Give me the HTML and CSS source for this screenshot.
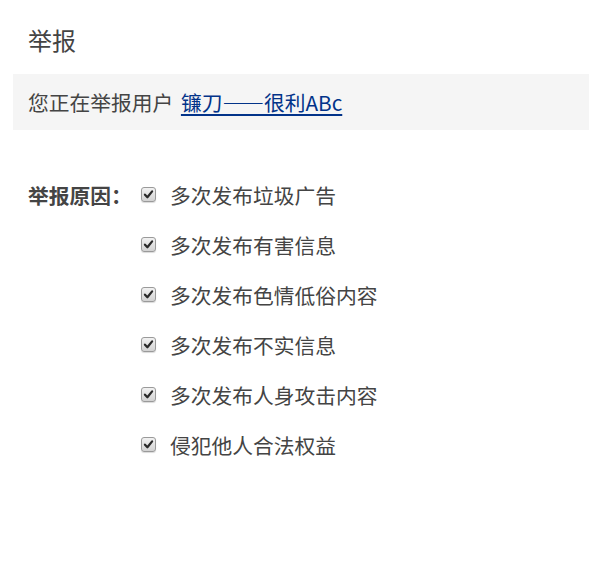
FILE: index.html
```html
<!DOCTYPE html>
<html lang="zh-CN">
<head>
<meta charset="utf-8">
<title>举报</title>
<link rel="stylesheet" href="styles.css">
</head>
<body>
<div class="page">
  <h1 class="title">举报</h1>
  <div class="notice">您正在举报用户 <a class="user" href="#">镰刀——很利ABc</a></div>
  <div class="reasons">
    <div class="label">举报原因：</div>
    <ul class="options">
      <li class="option"><span class="box"><svg viewBox="0 0 14 14"><path d="M3.2 7.2 L5.8 10 L10.9 3.6" fill="none" stroke="#2a2a2a" stroke-width="2.4" stroke-linecap="round" stroke-linejoin="round"/></svg></span><span class="text">多次发布垃圾广告</span></li>
      <li class="option"><span class="box"><svg viewBox="0 0 14 14"><path d="M3.2 7.2 L5.8 10 L10.9 3.6" fill="none" stroke="#2a2a2a" stroke-width="2.4" stroke-linecap="round" stroke-linejoin="round"/></svg></span><span class="text">多次发布有害信息</span></li>
      <li class="option"><span class="box"><svg viewBox="0 0 14 14"><path d="M3.2 7.2 L5.8 10 L10.9 3.6" fill="none" stroke="#2a2a2a" stroke-width="2.4" stroke-linecap="round" stroke-linejoin="round"/></svg></span><span class="text">多次发布色情低俗内容</span></li>
      <li class="option"><span class="box"><svg viewBox="0 0 14 14"><path d="M3.2 7.2 L5.8 10 L10.9 3.6" fill="none" stroke="#2a2a2a" stroke-width="2.4" stroke-linecap="round" stroke-linejoin="round"/></svg></span><span class="text">多次发布不实信息</span></li>
      <li class="option"><span class="box"><svg viewBox="0 0 14 14"><path d="M3.2 7.2 L5.8 10 L10.9 3.6" fill="none" stroke="#2a2a2a" stroke-width="2.4" stroke-linecap="round" stroke-linejoin="round"/></svg></span><span class="text">多次发布人身攻击内容</span></li>
      <li class="option"><span class="box"><svg viewBox="0 0 14 14"><path d="M3.2 7.2 L5.8 10 L10.9 3.6" fill="none" stroke="#2a2a2a" stroke-width="2.4" stroke-linecap="round" stroke-linejoin="round"/></svg></span><span class="text">侵犯他人合法权益</span></li>
    </ul>
  </div>
</div>
</body>
</html>
```
FILE: styles.css
```css
html, body {
  margin: 0;
  padding: 0;
  background: #ffffff;
}
body {
  font-family: "Noto Sans CJK SC", "Noto Sans", sans-serif;
  color: #444;
}
.page {
  padding-top: 24px;
}
.title {
  margin: 0;
  padding-left: 28px;
  font-size: 24px;
  font-weight: normal;
  line-height: 32px;
  color: #444;
}
.notice {
  margin: 18px 0 0 13px;
  height: 56px;
  line-height: 56px;
  padding-left: 15px;
  background: #f5f5f5;
  font-size: 20.75px;
  color: #444;
}
.user {
  margin-left: 3px;
  color: #023389;
  text-decoration: underline;
  text-underline-offset: 3px;
  text-decoration-thickness: 2px;
}
.reasons {
  margin-top: 40px;
  padding-left: 28px;
  display: grid;
  grid-template-columns: 113px 1fr;
  font-size: 20.75px;
}
.label {
  line-height: 50px;
  font-weight: bold;
  color: #444;
}
.options {
  list-style: none;
  margin: 0;
  padding: 0;
}
.option {
  display: flex;
  align-items: center;
  height: 50px;
}
.box {
  width: 15px;
  height: 15px;
  box-sizing: border-box;
  border: 1px solid #9a9a9a;
  border-radius: 3px;
  background: linear-gradient(#f2f2f2, #d2d2d2);
  box-shadow: 0 1px 1px rgba(0,0,0,0.15);
  display: flex;
  align-items: center;
  justify-content: center;
  margin-top: -2px;
}
.box svg {
  display: block;
  width: 13px;
  height: 13px;
}
.text {
  margin-left: 14px;
  color: #444;
}
```
